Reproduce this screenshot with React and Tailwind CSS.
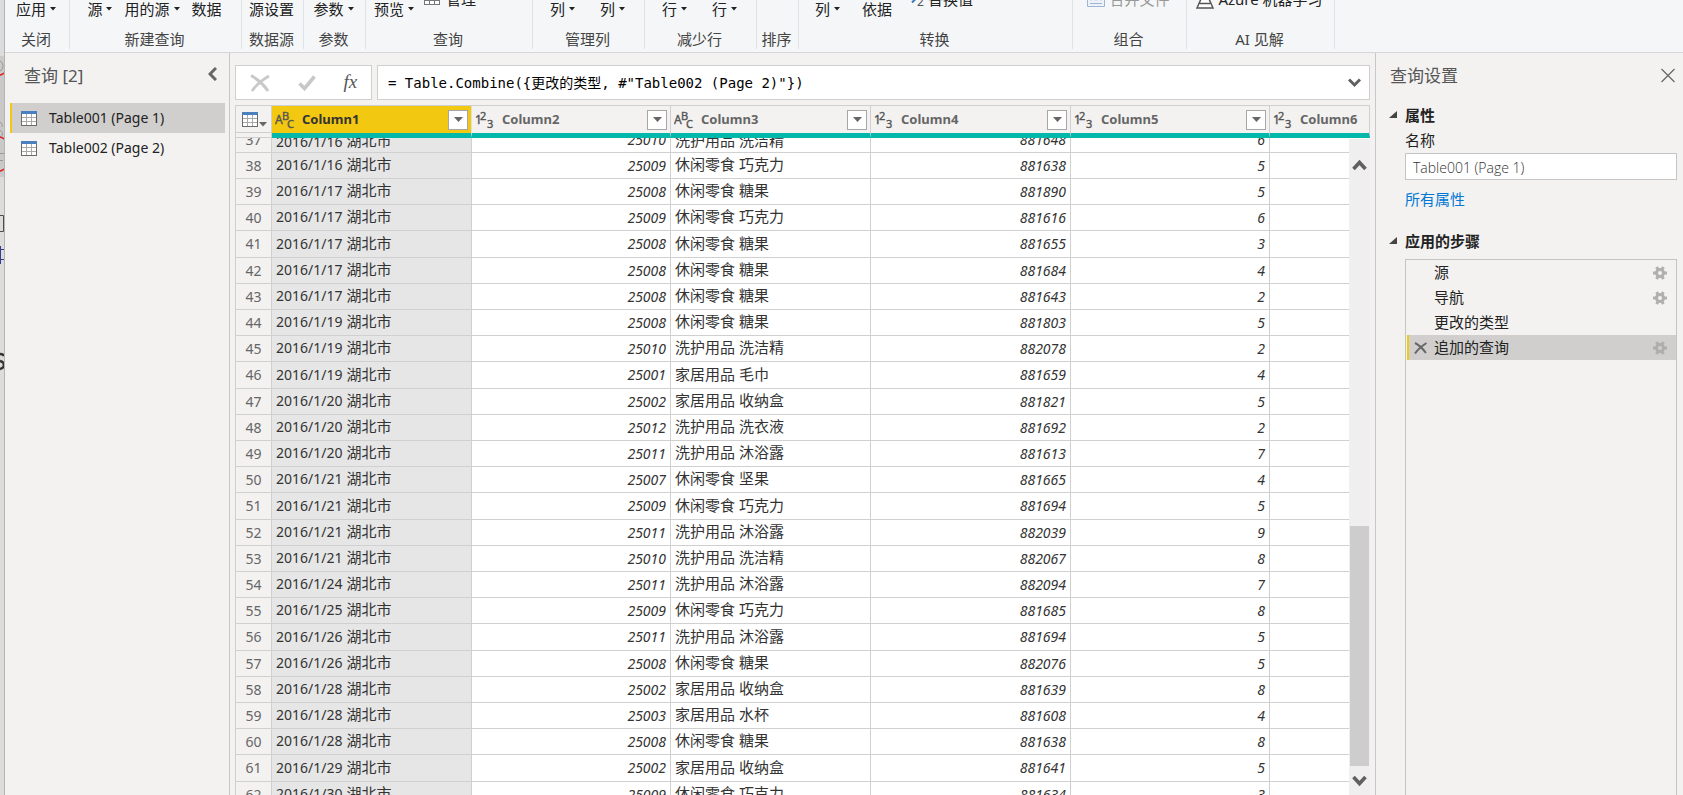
import { useState } from 'react';

const columns = [
  { name: 'Column1', type: 'text' },
  { name: 'Column2', type: 'number' },
  { name: 'Column3', type: 'text' },
  { name: 'Column4', type: 'number' },
  { name: 'Column5', type: 'number' },
  { name: 'Column6', type: 'number' },
];

const city = '湖北市';

const rows = [
  [37, '2016/1/16', 25010, '洗护用品 洗洁精', 881648, 6],
  [38, '2016/1/16', 25009, '休闲零食 巧克力', 881638, 5],
  [39, '2016/1/17', 25008, '休闲零食 糖果', 881890, 5],
  [40, '2016/1/17', 25009, '休闲零食 巧克力', 881616, 6],
  [41, '2016/1/17', 25008, '休闲零食 糖果', 881655, 3],
  [42, '2016/1/17', 25008, '休闲零食 糖果', 881684, 4],
  [43, '2016/1/17', 25008, '休闲零食 糖果', 881643, 2],
  [44, '2016/1/19', 25008, '休闲零食 糖果', 881803, 5],
  [45, '2016/1/19', 25010, '洗护用品 洗洁精', 882078, 2],
  [46, '2016/1/19', 25001, '家居用品 毛巾', 881659, 4],
  [47, '2016/1/20', 25002, '家居用品 收纳盒', 881821, 5],
  [48, '2016/1/20', 25012, '洗护用品 洗衣液', 881692, 2],
  [49, '2016/1/20', 25011, '洗护用品 沐浴露', 881613, 7],
  [50, '2016/1/21', 25007, '休闲零食 坚果', 881665, 4],
  [51, '2016/1/21', 25009, '休闲零食 巧克力', 881694, 5],
  [52, '2016/1/21', 25011, '洗护用品 沐浴露', 882039, 9],
  [53, '2016/1/21', 25010, '洗护用品 洗洁精', 882067, 8],
  [54, '2016/1/24', 25011, '洗护用品 沐浴露', 882094, 7],
  [55, '2016/1/25', 25009, '休闲零食 巧克力', 881685, 8],
  [56, '2016/1/26', 25011, '洗护用品 沐浴露', 881694, 5],
  [57, '2016/1/26', 25008, '休闲零食 糖果', 882076, 5],
  [58, '2016/1/28', 25002, '家居用品 收纳盒', 881639, 8],
  [59, '2016/1/28', 25003, '家居用品 水杯', 881608, 4],
  [60, '2016/1/28', 25008, '休闲零食 糖果', 881638, 8],
  [61, '2016/1/29', 25002, '家居用品 收纳盒', 881641, 5],
  [62, '2016/1/30', 25009, '休闲零食 巧克力', 881634, 3],
];

const steps = [
  { name: '源', gear: true },
  { name: '导航', gear: true },
  { name: '更改的类型', gear: false },
  { name: '追加的查询', gear: true },
];

const queries = ['Table001 (Page 1)', 'Table002 (Page 2)'];

function TableIcon({ className = '' }) {
  return (
    <svg width="16" height="15" viewBox="0 0 16 15" shapeRendering="crispEdges" className={className}>
      <rect width="16" height="15" fill="#6b6b6b" />
      <rect width="16" height="3" fill="#4a80bd" />
      <rect x="1" y="3" width="14" height="11" fill="#fff" />
      <path d="M5.5 3v11M10.5 3v11M1 6.5h14M1 10.5h14" stroke="#a8a8a8" fill="none" />
    </svg>
  );
}

function TypeIcon({ type }) {
  const [a, b, c] = type === 'text' ? ['A', 'B', 'C'] : ['1', '2', '3'];
  return (
    <svg width="20" height="20" viewBox="0 0 20 20" fill="#555" stroke="#555" strokeWidth="0.4" fontFamily="Noto Sans" fontSize="12">
      <text x="0" y="14">{a}</text>
      <text x={type === 'text' ? 7 : 5} y="10" fontSize="11">{b}</text>
      <text x={type === 'text' ? 12 : 12} y="18" fontSize="11">{c}</text>
    </svg>
  );
}

function GearIcon({ faded }) {
  return (
    <svg width="14" height="14" viewBox="0 0 14 14" fill="none" stroke={faded ? '#b0aeac' : '#b0b0b0'}>
      <circle cx="7" cy="7" r="3.5" strokeWidth="3" />
      <path d="M0 7h3M11 7h3" strokeWidth="3" />
      <path d="M3.6 1l1.400 2.500M10.400 1L9 3.500M3.600 13L5 10.500M10.400 13L9 10.500" strokeWidth="3" />
    </svg>
  );
}

function Caret() {
  return (
    <svg width="6" height="4" viewBox="0 0 6 4" className="ml-1" fill="#222">
      <path d="M0 0h6L3 3.6z" />
    </svg>
  );
}

function Group({ label, className, children }) {
  return (
    <div className={`flex shrink-0 flex-col items-center border-r border-[#dfe1e4] pr-0.5 ${className}`}>
      <div className="flex h-[19px] w-full items-end justify-center leading-5">{children}</div>
      <div className="mt-[10px] leading-5 text-[#444]">{label}</div>
    </div>
  );
}

function Command({ children, menu }) {
  return (
    <button className="flex shrink-0 items-center whitespace-nowrap leading-5">
      {children}
      {menu && <Caret />}
    </button>
  );
}

function Ribbon() {
  return (
    <header className="h-[53px] shrink-0 overflow-hidden border-b border-[#d4d6d9] bg-[#f4f6f8]">
      <div className="flex h-[49px] whitespace-nowrap">
        <Group label="关闭" className="w-[65px]">
          <Command menu>应用</Command>
        </Group>
        <Group label="新建查询" className="w-[172px] [&>div]:gap-3">
          <Command menu>源</Command>
          <Command menu>用的源</Command>
          <Command>数据</Command>
        </Group>
        <Group label="数据源" className="w-[62px]">
          <Command>源设置</Command>
        </Group>
        <Group label="参数" className="w-[62px]">
          <Command menu>参数</Command>
        </Group>
        <Group label="查询" className="w-[167px]">
          <div className="flex w-full items-end gap-[10px] pl-2">
            <Command menu>预览</Command>
            <button className="flex items-end gap-1.5 pb-[10px] leading-5">
              <svg width="16" height="15" viewBox="0 0 16 15" shapeRendering="crispEdges" className="mb-1" fill="#fff" stroke="#777">
                <path d="M.5.5h15v14h-15zM5.5 0v14M10.5 0v14M0 5.5h16M0 10.5h16" />
              </svg>
              管理
            </button>
          </div>
        </Group>
        <Group label="管理列" className="w-[112px] [&>div]:gap-[25px]">
          <Command menu>列</Command>
          <Command menu>列</Command>
        </Group>
        <Group label="减少行" className="w-[112px] [&>div]:gap-[25px]">
          <Command menu>行</Command>
          <Command menu>行</Command>
        </Group>
        <Group label="排序" className="w-[42px]" />
        <Group label="转换" className="w-[274px]">
          <div className="flex w-full items-end gap-[22px] pl-4">
            <Command menu>列</Command>
            <Command>依据</Command>
            <button className="-ml-2 flex items-end gap-1 pb-[10px] leading-5">
              <svg width="18" height="16" viewBox="0 0 18 16" className="mb-0.5" fill="none">
                <path d="M2 1v5q0 2 3 2h4M6 4.500l3.500 3.500L6 11.500" stroke="#3f78b5" strokeWidth="2" />
                <text x="11" y="15" fontSize="12" fill="#555" fontFamily="Noto Sans">2</text>
              </svg>
              替换值
            </button>
          </div>
        </Group>
        <Group label="组合" className="w-[114px]">
          <button className="flex items-end gap-1 pb-[10px] leading-5 text-[#999]">
            <svg width="18" height="15" viewBox="0 0 18 15" className="mb-[2px]" fill="#eef3fa" stroke="#9fb4d3">
              <path d="M.5.5h17v14h-17zM3 11.500h12M4 8.500l2-2 2 2M10 8.500l2-2 2 2" />
            </svg>
            合并文件
          </button>
        </Group>
        <Group label="AI 见解" className="w-[148px]">
          <button className="flex items-end gap-1 pb-[10px] leading-5">
            <svg width="18" height="16" viewBox="0 0 18 16" fill="#fff" stroke="#555" strokeWidth="1.500">
              <path d="M5 1v5L1 15h16L13 6V1M4 10.500h10" />
            </svg>
            <span>Azure 机器学习</span>
          </button>
        </Group>
      </div>
    </header>
  );
}

function QueryList() {
  const [active, setActive] = useState(0);
  return (
    <aside className="flex w-[225px] shrink-0 flex-col border-r border-[#c8c8c8]">
      <div className="flex h-[50px] items-start justify-between pt-[11px] pr-3 pl-[19px]">
        <h2 className="text-[17px] leading-6 text-[#555]">查询 [2]</h2>
        <button aria-label="折叠" className="mt-[3px]">
          <svg width="9" height="14" viewBox="0 0 9 14" fill="none" stroke="#666" strokeWidth="3">
            <path d="M8 1L2 7l6 6" />
          </svg>
        </button>
      </div>
      <nav className="mr-1 ml-[5px]">
        {queries.map((q, i) => (
          <button
            key={q}
            onClick={() => setActive(i)}
            className={`flex h-[30px] w-full items-center gap-3 border-l-2 pl-[9px] text-sm text-[#222] ${
              active === i ? 'border-[#f2c811] bg-[#d0cfcd]' : 'border-transparent'
            }`}
          >
            <TableIcon />
            {q}
          </button>
        ))}
      </nav>
    </aside>
  );
}

function FormulaBar() {
  const [formula, setFormula] = useState('= Table.Combine({更改的类型, #"Table002 (Page 2)"})');
  return (
    <div className="flex h-[35px] shrink-0 gap-[5px]">
      <div className="flex w-[137px] items-center justify-around border border-[#cfcfcf] bg-white">
        <button aria-label="取消">
          <svg width="20" height="18" viewBox="0 0 20 18" fill="none" stroke="#c8c8c8">
            <path d="M1 1.500C7 5 14 11 18 17" strokeWidth="3" />
            <path d="M19 2C12 6 6 11 2 17" strokeWidth="2.600" />
          </svg>
        </button>
        <button aria-label="确认">
          <svg width="18" height="16" viewBox="0 0 18 16" fill="none" stroke="#c8c8c8" strokeWidth="3.600">
            <path d="M1.500 8.500L6.500 13.500L16.500 1.500" />
          </svg>
        </button>
        <span className="pb-0.5 font-['Liberation_Serif',serif] text-[19px] leading-6 text-[#555] italic">fx</span>
      </div>
      <div className="flex flex-1 items-center border border-[#cfcfcf] bg-white pr-2 pl-[10px]">
        <input
          aria-label="公式"
          value={formula}
          onChange={(e) => setFormula(e.target.value)}
          className="min-w-0 flex-1 bg-transparent font-['DejaVu_Sans_Mono','Noto_Sans_CJK_SC',monospace] text-sm text-black outline-none"
        />
        <button aria-label="展开">
          <svg width="13" height="10" viewBox="0 0 13 10" fill="none" stroke="#606060" strokeWidth="3">
            <path d="M1 1.500l5.500 5.500L12 1.500" />
          </svg>
        </button>
      </div>
    </div>
  );
}

function HeaderCell({ column, selected, last }) {
  return (
    <th
      className={`border-r border-b-[5px] border-b-[#01b8aa] p-0 font-normal ${
        selected ? 'border-r-[#e0e0e0] bg-[#f2c811]' : 'border-r-[#cfcfcf] bg-[#f3f2f1]'
      }`}
    >
      <div className="flex h-[26px] items-center pr-[3px] pl-[3px]">
        <TypeIcon type={column.type} />
        <span className={`ml-[7px] text-[13px] font-bold ${selected ? 'text-[#333]' : 'text-[#666]'}`}>{column.name}</span>
        {!last && (
          <button aria-label={`筛选 ${column.name}`} className="ml-auto flex size-5 items-center justify-center border border-[#a6a6a6] bg-white">
            <svg width="9" height="5" viewBox="0 0 9 5" fill="#666">
              <path d="M0 0h9L4.500 5z" />
            </svg>
          </button>
        )}
      </div>
    </th>
  );
}

function Scrollbar() {
  return (
    <div className="absolute top-[33px] right-0 bottom-0 flex w-[21px] flex-col items-center bg-[#efefef] pt-5 pb-2">
      <svg width="15" height="12" viewBox="0 0 15 12" className="shrink-0" fill="none" stroke="#606060" strokeWidth="3.600">
        <path d="M1.500 10L7.500 3.500L13.500 10" />
      </svg>
      <div className="grow-[355]" />
      <div className="w-[19px] grow-[240] bg-[#cdcdcd]" />
      <svg width="15" height="12" viewBox="0 0 15 12" className="mt-[9px] shrink-0" fill="none" stroke="#606060" strokeWidth="3.600">
        <path d="M1.500 2L7.500 8.500L13.500 2" />
      </svg>
    </div>
  );
}

function DataGrid() {
  const numCell = 'border-r border-b border-[#d0d0d0] bg-white py-0 pr-1 pl-0 text-right text-sm italic';
  return (
    <div className="relative mt-[5px] min-h-0 flex-1 overflow-hidden border-t border-l border-[#cfcfcf]">
      <table className="w-full table-fixed border-separate border-spacing-0 text-[#333]">
        <colgroup>
          <col className="w-9" />
          <col className="w-[200px]" />
          <col className="w-[199px]" />
          <col className="w-[200px]" />
          <col className="w-[200px]" />
          <col className="w-[199px]" />
          <col />
        </colgroup>
        <thead>
          <tr className="h-8">
            <th className="border-r border-b border-[#cfcfcf] bg-[#f3f2f1] p-0 align-top">
              <div className="flex h-[27px] items-center border-b border-[#cfcfcf]">
                <button aria-label="表选项" className="flex items-end pl-[6px]">
                  <TableIcon />
                  <svg width="8" height="5" viewBox="0 0 8 5" className="ml-px" fill="#666">
                    <path d="M0 0h8L4 4.500z" />
                  </svg>
                </button>
              </div>
            </th>
            {columns.map((c, i) => (
              <HeaderCell key={c.name} column={c} selected={i === 0} last={i === columns.length - 1} />
            ))}
          </tr>
        </thead>
        <tbody>
          {rows.map(([n, date, code, item, order, qty], i) => (
            <tr
              key={n}
              className={
                i === 0
                  ? 'h-[15px] [&>td]:pb-0 [&>td>div]:flex [&>td>div]:h-[14px] [&>td>div]:items-end [&>td>div]:overflow-hidden [&>td>div]:leading-6 [&>td>div]:whitespace-pre'
                  : 'h-[26px] leading-[21px] nth-[5n]:h-[27px]'
              }
            >
              <td className="border-r border-b border-[#d0d0d0] bg-[#f3f2f1] p-0 text-center text-sm text-[#666]">
                <div className="justify-center">{n}</div>
              </td>
              <td className="border-r border-b border-[#d0d0d0] bg-[#e6e6e6] pt-0 pr-0 pb-0.5 pl-1">
                <div>
                  <span className="text-sm">{date}</span>
                  <span className="ml-1 text-[15px]">{city}</span>
                </div>
              </td>
              <td className={numCell}><div className="justify-end">{code}</div></td>
              <td className="border-r border-b border-[#d0d0d0] bg-white pt-0 pr-0 pb-0.5 pl-1 text-[15px]"><div>{item}</div></td>
              <td className={numCell}><div className="justify-end">{order}</div></td>
              <td className={numCell}><div className="justify-end">{qty}</div></td>
              <td className="border-b border-[#d0d0d0] bg-white p-0" />
            </tr>
          ))}
        </tbody>
      </table>
      <Scrollbar />
    </div>
  );
}

function SectionTitle({ children }) {
  return (
    <h3 className="flex items-center gap-2 font-bold leading-6">
      <svg width="8" height="8" viewBox="0 0 8 8" fill="#444">
        <path d="M8 0v7H0z" />
      </svg>
      {children}
    </h3>
  );
}

function QuerySettings() {
  const [name, setName] = useState('Table001 (Page 1)');
  const [step, setStep] = useState(3);
  return (
    <aside className="flex w-[308px] shrink-0 flex-col border-l border-[#c8c8c8] pr-[6px] pl-[13px]">
      <div className="flex h-[50px] items-start justify-between pt-[11px]">
        <h2 className="pl-px text-[17px] leading-6 text-[#555]">查询设置</h2>
        <button aria-label="关闭" className="mt-1 mr-[2px]">
          <svg width="14" height="15" viewBox="0 0 14 15" fill="none" stroke="#666" strokeWidth="1.200">
            <path d="M.5 1l13 13M13.500 1l-13 13" />
          </svg>
        </button>
      </div>
      <SectionTitle>属性</SectionTitle>
      <div className="flex flex-col pl-4">
        <label htmlFor="query-name" className="leading-[26px]">名称</label>
        <input
          id="query-name"
          value={name}
          onChange={(e) => setName(e.target.value)}
          className="h-[27px] w-full border border-[#c4c4c4] bg-white px-[7px] pt-px font-['Open_Sans',sans-serif] text-sm font-light text-[#333] outline-none"
        />
        <a href="#properties" className="mt-[7px] leading-6 text-[#0078d4]">所有属性</a>
      </div>
      <div className="mt-[18px]">
        <SectionTitle>应用的步骤</SectionTitle>
      </div>
      <ol className="mt-[6px] ml-4 flex-1 border-x border-t border-[#c4c4c4] pl-px">
        {steps.map((s, i) => (
          <li key={s.name}>
            <button
              onClick={() => setStep(i)}
              className={`flex h-[25px] w-full items-center border-l-2 pr-[9px] pl-[5px] text-[#222] ${
                step === i ? 'border-[#f2c811] bg-[#d0cfcd]' : 'border-transparent'
              }`}
            >
              <span className="w-[20px]">
                {step === i && (
                  <svg width="13" height="12" viewBox="0 0 13 12" fill="none" stroke="#666" strokeWidth="2">
                    <path d="M1 1C5 3 9 7 12 11M12.500 1C8 4 4 7 1 11.500" />
                  </svg>
                )}
              </span>
              <span className="flex-1 text-left">{s.name}</span>
              {s.gear && <GearIcon faded={step === i} />}
            </button>
          </li>
        ))}
      </ol>
    </aside>
  );
}

// sliver of the document window that sits behind the editor
function BackgroundWindow() {
  return (
    <div className="w-[5px] shrink-0 overflow-hidden border-r border-[#b4b4b4] bg-[#dcdcdc]">
      <svg width="4" height="795" viewBox="0 0 4 795" fill="none">
        <rect y="56" width="4" height="121" fill="#c9c9c9" />
        <path d="M0 61q3 1 3 5t-3 5M0 122q3 1 2 5M0 130q4 2 2 6M0 153.500h4M0 160.500h3" stroke="#999" />
        <path d="M0 75q2 0 4-2M0 137q2 0 4 2M0 171q2 0 4-2" stroke="#e01b1b" strokeWidth="1.500" />
        <path d="M0 215.500h3.500v16H0" stroke="#4d4d4d" />
        <path d="M.5 246v18M1 249.500h3M1 259.500h3" stroke="#3b3b90" />
        <path d="M4 356q-1-2-4-2M0 361q4 1 4 4t-4 4" stroke="#333" strokeWidth="2.500" />
      </svg>
    </div>
  );
}

export default function App() {
  return (
    <div className="flex h-screen overflow-hidden bg-[#f3f2f1] font-['Noto_Sans','Noto_Sans_CJK_SC',sans-serif] text-[15px] text-[#222]">
      <BackgroundWindow />
      <div className="flex min-w-0 flex-1 flex-col">
        <Ribbon />
        <div className="flex min-h-0 flex-1">
          <QueryList />
          <main className="flex min-w-0 flex-1 flex-col px-[5px] pt-3">
            <FormulaBar />
            <DataGrid />
          </main>
          <QuerySettings />
        </div>
      </div>
    </div>
  );
}
